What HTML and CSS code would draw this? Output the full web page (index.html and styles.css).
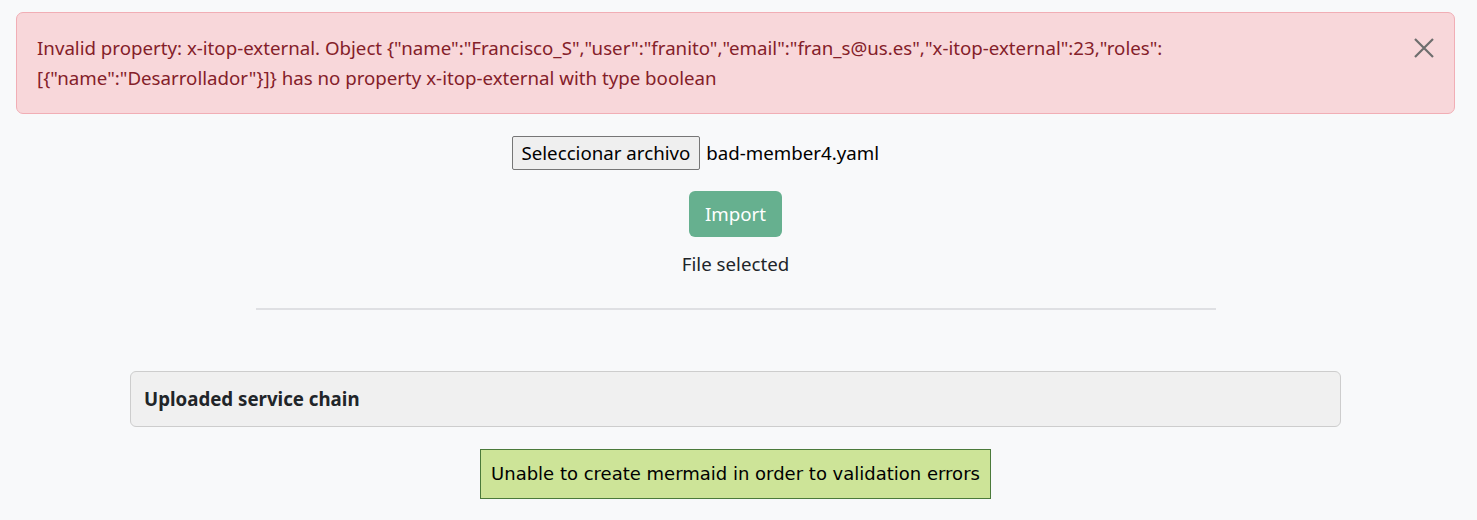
FILE: index.html
```html
<!DOCTYPE html>
<html lang="es">
<head>
<meta charset="utf-8">
<title>Import</title>
<link rel="stylesheet" href="styles.css">
</head>
<body>
<div class="page">
  <div class="alert">
    <div class="alert-text">Invalid property: x-itop-external. Object {"name":"Francisco_S","user":"franito","email":"fran_s@us.es","x-itop-external":23,"roles":[{"name":"Desarrollador"}]} has no property x-itop-external with type boolean</div>
    <button class="close" aria-label="Close">
      <svg width="20" height="20" viewBox="0 0 20 20"><path d="M1 1L19 19M19 1L1 19" stroke="#6e6e6e" stroke-width="2.2" fill="none"/></svg>
    </button>
  </div>
  <div class="upload">
    <div class="file-row">
      <span class="file-btn">Seleccionar archivo</span>
      <span class="file-name">bad-member4.yaml</span>
    </div>
    <button class="import">Import</button>
    <div class="status">File selected</div>
  </div>
  <hr class="divider">
  <div class="card">
    <div class="card-header">Uploaded service chain</div>
  </div>
  <div class="mermaid-row">
    <div class="mermaid-box">Unable to create mermaid in order to validation errors</div>
  </div>
</div>
</body>
</html>
```
FILE: styles.css
```css
html, body {
  margin: 0;
  padding: 0;
  background: #f8f9fa;
}
body {
  font-family: "Noto Sans", "Open Sans", sans-serif;
  font-size: 18.7px;
  line-height: 30px;
  color: #212529;
}
.page {
  padding: 12px 22px 0 16px;
}
.alert {
  display: flex;
  align-items: flex-start;
  background: #f8d7da;
  border: 1px solid #f1aeb5;
  border-radius: 7px;
  color: #842029;
  padding: 20px 20px 20px 20px;
}
.alert-text {
  flex: 1;
  padding-right: 40px;
}
.close {
  background: none;
  border: 0;
  padding: 0;
  margin: 5px 0 0 0;
  width: 20px;
  height: 20px;
  display: flex;
  align-items: center;
  justify-content: center;
}
.upload {
  display: flex;
  flex-direction: column;
  align-items: center;
  padding-top: 22px;
}
.file-row {
  display: flex;
  align-items: center;
  gap: 6px;
  width: 448px;
}
.file-btn {
  background: #efefef;
  border: 1px solid #767676;
  border-radius: 2px;
  color: #000;
  padding: 1px 9px;
  line-height: 30px;
}
.file-name {
  color: #000;
}
.import {
  margin-top: 21px;
  font: inherit;
  color: #fff;
  background: #66b08f;
  border: 0;
  border-radius: 6px;
  padding: 8px 16px;
  line-height: 30px;
}
.status {
  margin-top: 12px;
}
.divider {
  width: 960px;
  margin: 29px auto 0 auto;
  border: 0;
  border-top: 2px solid #dfe0e3;
}
.card {
  margin: 61px 114px 0 114px;
  border: 1px solid #cdcdcd;
  border-radius: 6px;
  background: #f0f0f0;
}
.card-header {
  padding: 12px 13px;
  font-weight: bold;
  line-height: 30px;
}
.mermaid-row {
  display: flex;
  justify-content: center;
  margin-top: 22px;
}
.mermaid-box {
  background: #cde498;
  border: 1px solid #4b7a3a;
  color: #000;
  font-family: "DejaVu Sans", sans-serif;
  font-size: 18px;
  padding: 9px 10px;
}
```
